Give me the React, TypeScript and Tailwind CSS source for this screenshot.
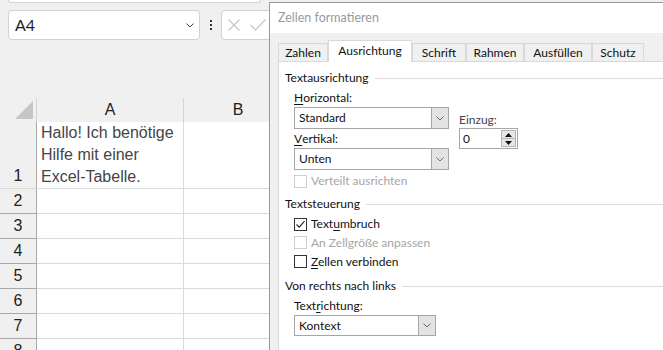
import type { ReactNode } from "react";

/** Excel sheet with the "Zellen formatieren" dialog open on the Ausrichtung tab */

function Chevron({ className = "" }: { className?: string }) {
  return (
    <svg width="8" height="5" viewBox="0 0 8 5" className={className}>
      <path d="M0.5 0.5 L4 4 L7.5 0.5" fill="none" stroke="currentColor" strokeWidth="1" />
    </svg>
  );
}

function Select({ value, width, height = 22 }: { value: string; width: string; height?: number }) {
  return (
    <div
      className={`flex ${width} ${height === 22 ? "h-[22px]" : "h-[21px]"} items-stretch border border-[#a6a6a6] bg-white`}
    >
      <div className="flex flex-1 items-center pl-[4px] text-[12px] text-[#111]">{value}</div>
      <div className="flex w-[17px] items-center justify-center border-l border-[#a6a6a6] bg-[#e3e3e3] text-[#6b6b6b]">
        <Chevron />
      </div>
    </div>
  );
}

function Checkbox({
  label,
  checked = false,
  disabled = false,
  rowClass = "h-[19px]",
}: {
  label: ReactNode;
  checked?: boolean;
  disabled?: boolean;
  rowClass?: string;
}) {
  return (
    <div className={`flex ${rowClass} items-center`}>
      <div
        className={`flex h-[13px] w-[13px] items-center justify-center border bg-white ${
          disabled ? "border-[#cfcfcf]" : "border-[#333]"
        }`}
      >
        {checked && (
          <svg width="11" height="11" viewBox="0 0 11 11">
            <path d="M1.5 5.5 L4.2 8.2 L9.5 2.2" fill="none" stroke="#222" strokeWidth="1.1" />
          </svg>
        )}
      </div>
      <span className={`ml-[4px] text-[12px] ${disabled ? "text-[#a6a6a6]" : "text-[#111]"}`}>{label}</span>
    </div>
  );
}

function Group({ title }: { title: string }) {
  return (
    <div className="flex h-[16px] items-center">
      <span className="text-[12px] text-[#111]">{title}</span>
      <div className="ml-[6px] h-px flex-1 bg-[#dcdcdc]" />
    </div>
  );
}

const tabs = [
  { name: "Zahlen", w: "w-[50px]" },
  { name: "Ausrichtung", w: "w-[84px]", active: true },
  { name: "Schrift", w: "w-[54px]" },
  { name: "Rahmen", w: "w-[58px]" },
  { name: "Ausfüllen", w: "w-[68px]" },
  { name: "Schutz", w: "w-[52px]" },
];

function Sheet() {
  const rows = [2, 3, 4, 5, 6, 7, 8];
  return (
    <div className="w-[269px] shrink-0 overflow-hidden bg-[#f0f0f0] font-['Liberation_Sans',sans-serif]">
      <div className="mx-2 h-[3px] rounded-b-[4px] border-x border-b border-[#d4d4d4] bg-white" />

      {/* formula bar */}
      <div className="mt-[7px] flex h-[30px] items-center">
        <div className="ml-2 flex h-[30px] w-[192px] shrink-0 items-center justify-between rounded-[4px] border border-[#d1d1d1] bg-white pl-[6px] pr-[5px]">
          <span className="font-['Lato',sans-serif] text-[16px] text-[#1f1f1f]">A4</span>
          <Chevron className="text-[#444]" />
        </div>
        <div className="ml-[10px] flex flex-col gap-[2px]">
          <div className="h-[2px] w-[2px] bg-[#333]" />
          <div className="h-[2px] w-[2px] bg-[#333]" />
          <div className="h-[2px] w-[2px] bg-[#333]" />
        </div>
        <div className="ml-[9px] flex h-[30px] w-[80px] shrink-0 items-center gap-[10px] rounded-[4px] border border-[#d1d1d1] bg-white pl-[6px]">
          <svg width="12" height="12" viewBox="0 0 12 12">
            <path d="M0.5 0.5 L11.5 11.5 M11.5 0.5 L0.5 11.5" stroke="#c4c4c4" strokeWidth="1.1" />
          </svg>
          <svg width="16" height="12" viewBox="0 0 16 12">
            <path d="M0.5 6 L5.5 11 L15.5 0.5" fill="none" stroke="#c4c4c4" strokeWidth="1.1" />
          </svg>
        </div>
      </div>

      {/* grid */}
      <div className="mt-[58px] w-[300px]">
        <div className="flex h-[24px] text-[16px] text-[#222]">
          <div className="flex w-[37px] shrink-0 items-end justify-end border-r border-[#d4d4d4] pb-[3px] pr-[3px]">
            <svg width="18" height="18" viewBox="0 0 18 18">
              <path d="M18 0 L18 18 L0 18 Z" fill="#c6c6c6" />
            </svg>
          </div>
          <div className="flex w-[147px] shrink-0 items-center justify-center border-r border-[#d4d4d4]">A</div>
          <div className="flex w-[108px] shrink-0 items-center justify-center">B</div>
        </div>

        <div className="flex h-[67px] border-b border-[#dadada]">
          <div className="flex w-[37px] shrink-0 items-end justify-center border-r border-[#a9a9a9] bg-[#f0f0f0] pb-[1px] text-[16px] leading-[22px] text-[#222]">
            1
          </div>
          <div className="w-[147px] shrink-0 border-r border-[#dadada] bg-white pl-[4px] text-[16px] leading-[22px] text-[#454545]">
            Hallo! Ich benötige
            <br />
            Hilfe mit einer
            <br />
            Excel-Tabelle.
          </div>
          <div className="w-[108px] shrink-0 bg-white" />
        </div>

        {rows.map((r) => (
          <div key={r} className="flex h-[25px] border-b border-[#dadada]">
            <div className="-mb-px flex w-[37px] shrink-0 items-center justify-center border-b border-r border-[#a9a9a9] bg-[#f0f0f0] text-[16px] text-[#222]">
              {r}
            </div>
            <div className="w-[147px] shrink-0 border-r border-[#dadada] bg-white" />
            <div className="w-[108px] shrink-0 bg-white" />
          </div>
        ))}
      </div>
    </div>
  );
}

function Dialog() {
  return (
    <div className="mt-[2px] h-[348px] w-[394px] shrink-0 overflow-hidden border-l border-t border-[#9a9a9a] bg-[#f0f0f0] font-['Lato',sans-serif]">
      <div className="flex h-[30px] items-center bg-white pl-[8px] text-[12.5px] text-[#9a9a9a]">Zellen formatieren</div>

      <div className="w-[430px] pl-[8px] pt-[7px]">
        <div className="flex h-[21px] items-end">
          {tabs.map((t) =>
            t.active ? (
              <div
                key={t.name}
                className={`relative z-10 -mb-px flex h-[22px] ${t.w} items-center justify-center border-x border-t border-[#d9d9d9] bg-white pb-[1px] text-[12px] text-[#111]`}
              >
                {t.name}
              </div>
            ) : (
              <div
                key={t.name}
                className={`flex h-[18px] ${t.w} items-center justify-center border-x border-t border-[#d9d9d9] bg-[#f0f0f0] text-[12px] text-[#111]`}
              >
                {t.name}
              </div>
            )
          )}
        </div>

        <div className="h-[300px] border border-[#d9d9d9] bg-white pl-[6px] pt-[8px]">
          <Group title="Textausrichtung" />
          <div className="ml-[9px] mt-[4px] flex">
            <div className="flex w-[155px] flex-col">
              <div className="flex h-[15px] items-center text-[12px] text-[#111]">
                <span className="underline underline-offset-2">H</span>orizontal:
              </div>
              <div className="mt-[2px]">
                <Select value="Standard" width="w-[155px]" />
              </div>
              <div className="mt-[2px] flex h-[16px] items-center text-[12px] text-[#111]">
                <span className="underline underline-offset-2">V</span>ertikal:
              </div>
              <div className="mt-[1px]">
                <Select value="Unten" width="w-[155px]" />
              </div>
              <Checkbox label="Verteilt ausrichten" disabled rowClass="h-[22px]" />
            </div>
            <div className="ml-[10px] flex flex-col pt-[22px]">
              <div className="flex h-[15px] items-center text-[12px] text-[#444]">Einzug:</div>
              <div className="mt-[1px] flex h-[21px] w-[59px] items-stretch border border-[#a6a6a6] bg-white">
                <div className="flex flex-1 items-center pl-[3px] text-[12px] text-[#111]">0</div>
                <div className="my-[1px] mr-[1px] flex w-[15px] flex-col border border-[#b5b5b5] bg-[#e6e6e6]">
                  <div className="flex flex-1 items-center justify-center border-b border-[#b5b5b5]">
                    <svg width="7" height="4" viewBox="0 0 7 4">
                      <path d="M0 4 L3.5 0 L7 4 Z" fill="#111" />
                    </svg>
                  </div>
                  <div className="flex flex-1 items-center justify-center">
                    <svg width="7" height="4" viewBox="0 0 7 4">
                      <path d="M0 0 L7 0 L3.5 4 Z" fill="#111" />
                    </svg>
                  </div>
                </div>
              </div>
            </div>
          </div>

          <div className="mt-[4px]">
            <Group title="Textsteuerung" />
          </div>
          <div className="ml-[9px] mt-[3px] flex flex-col">
            <Checkbox
              checked
              rowClass="h-[18px]"
              label={
                <>
                  Text<span className="underline underline-offset-2">u</span>mbruch
                </>
              }
            />
            <Checkbox label="An Zellgröße anpassen" disabled />
            <Checkbox
              label={
                <>
                  <span className="underline underline-offset-2">Z</span>ellen verbinden
                </>
              }
            />
          </div>

          <div className="mt-[7px]">
            <Group title="Von rechts nach links" />
          </div>
          <div className="ml-[9px] mt-[4px] flex flex-col">
            <div className="flex h-[16px] items-center text-[12px] text-[#111]">
              Text<span className="underline underline-offset-2">r</span>ichtung:
            </div>
            <div className="mt-[1px]">
              <Select value="Kontext" width="w-[142px]" height={21} />
            </div>
          </div>
        </div>
      </div>
    </div>
  );
}

export default function App() {
  return (
    <div className="flex h-[350px] w-[663px] overflow-hidden bg-[#f0f0f0]">
      <Sheet />
      <Dialog />
    </div>
  );
}
